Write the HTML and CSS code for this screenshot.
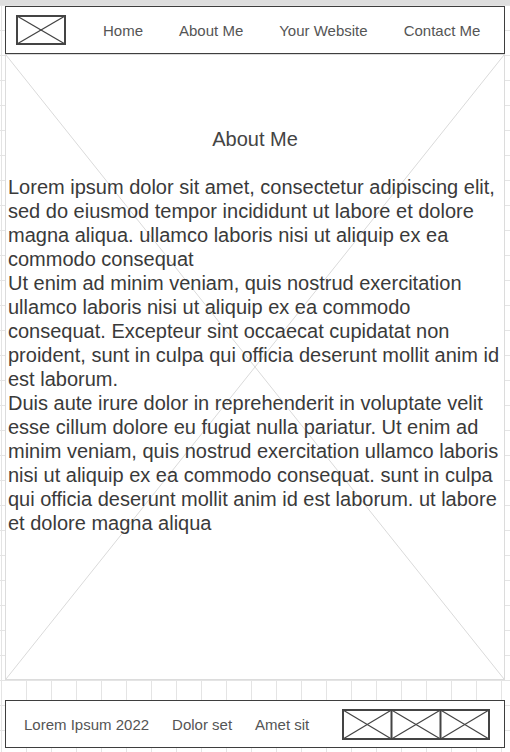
FILE: index.html
```html
<!DOCTYPE html>
<html lang="en">
<head>
<meta charset="utf-8">
<title>About Me</title>
<link rel="stylesheet" href="styles.css">
</head>
<body>
<div class="topbar"></div>
<div class="page">
  <header class="header">
    <svg class="logo" width="50" height="30" viewBox="0 0 50 30">
      <rect x="1" y="1" width="48" height="28" fill="#fff" stroke="#444" stroke-width="2"/>
      <line x1="1" y1="1" x2="49" y2="29" stroke="#444" stroke-width="1.3"/>
      <line x1="49" y1="1" x2="1" y2="29" stroke="#444" stroke-width="1.3"/>
    </svg>
    <nav class="nav">
      <a class="nav-link">Home</a>
      <a class="nav-link">About Me</a>
      <a class="nav-link">Your Website</a>
      <a class="nav-link">Contact Me</a>
    </nav>
  </header>
  <main class="main">
    <svg class="main-x" viewBox="0 0 100 100" preserveAspectRatio="none">
      <line x1="0" y1="0" x2="100" y2="100" vector-effect="non-scaling-stroke"/>
      <line x1="100" y1="0" x2="0" y2="100" vector-effect="non-scaling-stroke"/>
    </svg>
    <h1 class="title">About Me</h1>
    <div class="content">
      <p>Lorem ipsum dolor sit amet, consectetur adipiscing elit, sed do eiusmod tempor incididunt ut labore et dolore magna aliqua. ullamco laboris nisi ut aliquip ex ea commodo consequat</p>
      <p>Ut enim ad minim veniam, quis nostrud exercitation ullamco laboris nisi ut aliquip ex ea commodo consequat. Excepteur sint occaecat cupidatat non proident, sunt in culpa qui officia deserunt mollit anim id est laborum.</p>
      <p>Duis aute irure dolor in reprehenderit in voluptate velit esse cillum dolore eu fugiat nulla pariatur. Ut enim ad minim veniam, quis nostrud exercitation ullamco laboris nisi ut aliquip ex ea commodo consequat. sunt in culpa qui officia deserunt mollit anim id est laborum. ut labore et dolore magna aliqua</p>
    </div>
  </main>
  <footer class="footer">
    <span class="footer-item">Lorem Ipsum 2022</span>
    <span class="footer-item">Dolor set</span>
    <span class="footer-item">Amet sit</span>
    <svg class="footer-logos" width="148" height="31" viewBox="0 0 148 31">
      <rect x="1" y="1" width="146" height="29" fill="#fff" stroke="#444" stroke-width="2"/>
      <line x1="49.5" y1="1" x2="49.5" y2="30" stroke="#444" stroke-width="2"/>
      <line x1="98.5" y1="1" x2="98.5" y2="30" stroke="#444" stroke-width="2"/>
      <line x1="1" y1="1" x2="49.5" y2="30" stroke="#444" stroke-width="1.2"/>
      <line x1="49.5" y1="1" x2="1" y2="30" stroke="#444" stroke-width="1.2"/>
      <line x1="49.5" y1="1" x2="98.5" y2="30" stroke="#444" stroke-width="1.2"/>
      <line x1="98.5" y1="1" x2="49.5" y2="30" stroke="#444" stroke-width="1.2"/>
      <line x1="98.5" y1="1" x2="147" y2="30" stroke="#444" stroke-width="1.2"/>
      <line x1="147" y1="1" x2="98.5" y2="30" stroke="#444" stroke-width="1.2"/>
    </svg>
  </footer>
</div>
</body>
</html>
```
FILE: styles.css
```css
* { box-sizing: border-box; }

html, body {
  margin: 0;
  padding: 0;
}

body {
  width: 510px;
  height: 752px;
  overflow: hidden;
  font-family: "Liberation Sans", Arial, sans-serif;
  color: #3a3a3a;
  background-color: #fff;
  background-image:
    linear-gradient(to right, #e4e4e4 1px, transparent 1px),
    linear-gradient(to bottom, #e4e4e4 1px, transparent 1px);
  background-size: 25px 25px;
  background-position: 1px 5px;
}

.topbar {
  height: 5px;
  background: #dedede;
}

.page {
  width: 500px;
  margin-left: 5px;
  padding-top: 1px;
  display: flex;
  flex-direction: column;
}

.header {
  height: 48px;
  border: 1px solid #3e3e3e;
  background: #fff;
  display: flex;
  align-items: center;
  padding: 0 10px;
  gap: 37px;
}

.logo { display: block; flex: none; }

.nav {
  display: flex;
  gap: 36px;
}

.nav-link {
  font-size: 15px;
  color: #555;
  text-decoration: none;
}

.main {
  position: relative;
  height: 626px;
  border: 1px solid #dcdcdc;
  background: #fff;
  padding: 72px 2px 0 2px;
}

.main-x {
  position: absolute;
  left: 0;
  top: 0;
  width: 100%;
  height: 100%;
  stroke: #dadada;
  stroke-width: 1;
}

.title {
  position: relative;
  margin: 0 0 24px 0;
  font-size: 20px;
  line-height: 24px;
  font-weight: normal;
  text-align: center;
  color: #444;
}

.content {
  position: relative;
  font-size: 20px;
  line-height: 24px;
  color: #3a3a3a;
}

.content p { margin: 0; }

.footer {
  margin-top: 20px;
  height: 48px;
  border: 1px solid #3e3e3e;
  background: #fff;
  display: flex;
  align-items: center;
  padding: 0 14px 0 18px;
  gap: 23px;
}

.footer-item {
  font-size: 15px;
  color: #555;
}

.footer-logos {
  display: block;
  margin-left: auto;
}
```
